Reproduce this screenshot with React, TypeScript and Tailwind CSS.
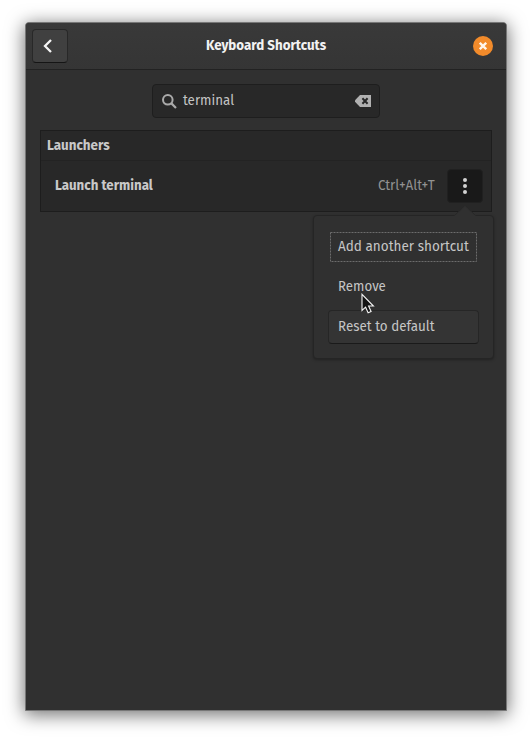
import { useLayoutEffect, useRef, useState } from "react";

type LabelProps = { text: string; box: string; className?: string };

// Condenses a line of text so that it fills the width of its box.
function Label({ text, box, className = "" }: LabelProps) {
  const outer = useRef<HTMLSpanElement>(null);
  const inner = useRef<HTMLSpanElement>(null);
  const [scale, setScale] = useState(1);
  useLayoutEffect(() => {
    if (outer.current && inner.current) {
      setScale(outer.current.clientWidth / inner.current.offsetWidth);
    }
  }, [text]);
  return (
    <span ref={outer} className={`block shrink-0 whitespace-nowrap leading-5 ${box} ${className}`}>
      <span ref={inner} className="inline-block origin-left -translate-y-px" style={{ transform: `scaleX(${scale})` }}>
        {text}
      </span>
    </span>
  );
}

function Header() {
  return (
    <header className="flex h-[47px] shrink-0 items-start justify-between rounded-t-[3px] border-b border-[#222222] bg-gradient-to-b from-[#393939] to-[#353535] pr-[13px] pl-[6px]">
      <button className="mt-[6px] flex h-[34px] w-9 items-center justify-center rounded-[4px] border border-[#282828] border-b-[#151515] bg-[#404040]" aria-label="Back">
        <svg width="10" height="14" viewBox="0 0 10 14" className="-ml-1" fill="none">
          <path d="M8 1 2 7l6 6" stroke="#f5f5f5" strokeWidth="2.3" />
        </svg>
      </button>
      <Label text="Keyboard Shortcuts" box="w-[120px]" className="mt-[13px] -ml-[9px] font-bold text-[#f2f2f2]" />
      <button className="mt-[13px] flex size-5 items-center justify-center rounded-full bg-[#f28b2b]" aria-label="Close">
        <svg width="8" height="8" viewBox="0 0 8 8">
          <path d="m.8.8 6.4 6.4M7.2.8.8 7.2" stroke="#fff6ed" strokeWidth="2.3" />
        </svg>
      </button>
    </header>
  );
}

function SearchBox() {
  return (
    <div className="mt-[14px] ml-[126px] flex h-[34px] w-[228px] shrink-0 items-center rounded-[4px] border border-[#1e1e1e] bg-[#282828] pr-2 pl-[9px]">
      <svg width="15" height="15" viewBox="0 0 15 15" fill="none" stroke="#aaaaaa" className="shrink-0">
        <circle cx="5.8" cy="5.8" r="4.8" strokeWidth="2" />
        <path d="m9.4 9.4 4.6 4.6" strokeWidth="2.2" />
      </svg>
      <Label text="terminal" box="w-[51px]" className="ml-[6px] text-[#c5c5c5]" />
      <svg width="16" height="12" viewBox="0 0 16 12" className="ml-auto">
        <path d="M5 0h11v12H5L0 6.8V5.2z" fill="#b1b1b1" />
        <path d="m7.4 3.3 5.2 5.4m0-5.4L7.4 8.7" stroke="#282828" strokeWidth="2" />
      </svg>
    </div>
  );
}

function Menu() {
  return (
    <div className="absolute top-[46px] -right-[11px] h-[144px] w-[181px] rounded-[4px] border border-[#252525] bg-[#303030] px-[14px] pt-[14px] shadow-[0_1px_3px_rgba(0,0,0,0.3)]">
      <svg width="22" height="11" viewBox="0 0 22 11" className="absolute -top-[11px] left-[140px]">
        <path d="M0 11 11 .5 22 11z" fill="#303030" />
        <path d="M0 10.5h.5L11 .5l10.5 10h.5" fill="none" stroke="#282828" />
        <path d="M1 11 11 1.2 21 11z" fill="#303030" />
      </svg>
      <button className="flex h-[34px] w-[151px] items-start px-[10px] pt-[7px]">
        <Label text="Add another shortcut" box="w-[131px]" className="text-[#c6c6c6]" />
      </button>
      <svg width="148" height="31" className="pointer-events-none absolute top-[16px] left-[15px]" fill="none">
        <rect x="1.5" y=".5" width="146" height="29" stroke="#6c6c6c" strokeDasharray="2 1" />
      </svg>
      <button className="mt-[6px] flex h-[34px] w-[151px] items-start px-[10px] pt-[7px]">
        <Label text="Remove" box="w-12" className="text-[#c6c6c6]" />
      </button>
      <button className="mt-[6px] flex h-[34px] w-[151px] shrink-0 items-start rounded-[4px] border border-[#262626] border-b-[#1a1a1a] bg-[#343434] px-[9px] pt-[6px]">
        <Label text="Reset to default" box="w-[97px]" className="text-[#c6c6c6]" />
      </button>
      <svg width="15" height="23" viewBox="0 0 15 23" className="absolute top-[77px] left-[46px]">
        <path d="M2 1.3v16.2l3.6-3.3 2.5 5.5 3-1.3-2.5-5.4h4.8z" fill="#141414" stroke="#f5f5f5" strokeWidth="1.1" />
      </svg>
    </div>
  );
}

function Shortcuts() {
  return (
    <section className="mt-[12px] ml-[14px] h-[82px] w-[452px] shrink-0 border border-[#1d1d1d] bg-[#282828]">
      <div className="h-[30px] border-b border-[#232323] pt-[5px] pl-[6px]">
        <Label text="Launchers" box="w-[63px]" className="font-bold text-[#c9c9c9]" />
      </div>
      <div className="flex h-[50px] items-center pr-2 pl-[14px]">
        <Label text="Launch terminal" box="w-[98px]" className="font-bold text-[#c9c9c9]" />
        <Label text="Ctrl+Alt+T" box="w-[57px]" className="ml-auto text-[#929292]" />
        <div className="relative ml-3">
          <button className="flex h-[34px] w-9 flex-col items-center justify-center gap-[2px] rounded-[4px] border border-[#202020] bg-[#191919]" aria-label="Options">
            <span className="size-1 rounded-full bg-[#d2d2d2]" />
            <span className="size-1 rounded-full bg-[#d2d2d2]" />
            <span className="size-1 rounded-full bg-[#d2d2d2]" />
          </button>
          <Menu />
        </div>
      </div>
    </section>
  );
}

export default function App() {
  return (
    <div className="h-[739px] w-[532px] overflow-hidden bg-white pt-[22px] pl-[25px] font-['Fira_Sans','Noto_Sans',sans-serif] text-[14.67px]">
      <main className="flex h-[689px] w-[482px] flex-col rounded-t-[4px] border border-[#777777] bg-[#303030] shadow-[0_3px_18px_1px_rgba(0,0,0,0.55)]">
        <Header />
        <SearchBox />
        <Shortcuts />
      </main>
    </div>
  );
}
